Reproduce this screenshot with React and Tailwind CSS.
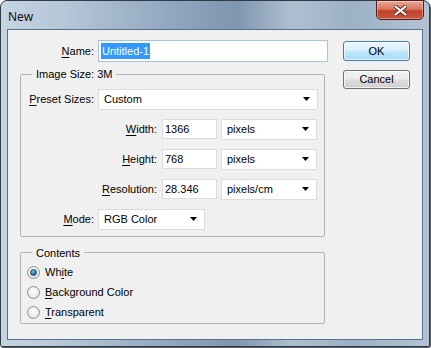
import React from 'react';

function Key({ children }) {
  return <span className="underline underline-offset-[2px]">{children}</span>;
}

function Arrow() {
  return (
    <svg width="7" height="4" viewBox="0 0 7 4" className="shrink-0">
      <path d="M0 0h7L3.5 4z" fill="#000" />
    </svg>
  );
}

function Select({ value, className }) {
  return (
    <div className={`flex h-[21px] items-center justify-between border border-[#dcdcdc] bg-white pl-[5px] pr-[7px] ${className}`}>
      <span>{value}</span>
      <Arrow />
    </div>
  );
}

function Field({ value }) {
  return (
    <div className="flex h-[20px] w-[55px] items-center border border-[#dcdcdc] bg-white pl-[2px]">
      {value}
    </div>
  );
}

function SizeRow({ label, value, unit }) {
  return (
    <div className="flex items-center">
      <div className="w-[136px] text-right">{label}</div>
      <div className="ml-[5px]">
        <Field value={value} />
      </div>
      <Select value={unit} className="ml-[4px] w-[96px]" />
    </div>
  );
}

function Radio({ checked, children }) {
  return (
    <div className="flex h-[20px] items-center">
      <span className="flex h-[13px] w-[13px] items-center justify-center rounded-full border border-[#8f9090] bg-[radial-gradient(circle_at_50%_40%,#ffffff_0%,#eeeeee_50%,#d2d2d2_100%)]">
        {checked && (
          <span className="h-[7px] w-[7px] rounded-full border border-[#164a70] bg-[radial-gradient(circle_at_40%_35%,#7cc6ec_0%,#2479b3_55%,#143f63_100%)]" />
        )}
      </span>
      <span className="ml-[5px]">{children}</span>
    </div>
  );
}

export default function App() {
  return (
    <div className="h-[348px] w-[431px] bg-white font-['Liberation_Sans',Arial,sans-serif] text-[11px] text-black">
      <div className="flex h-[347px] w-[430px] flex-col rounded-t-[7px] rounded-b-[2px] border border-[#2e3b49] bg-[linear-gradient(90deg,#c6d4e2_0%,#b6c7d8_14%,#93a9c0_38%,#7f96af_55%,#aebfd1_68%,#9cb1c6_82%,#b2c3d4_100%)] px-[6px] pb-[6px] shadow-[1px_1px_1px_rgba(0,0,0,0.7)]">
        {/* title bar */}
        <div className="flex h-[28px] shrink-0 items-start justify-between">
          <span className="mt-[7px] ml-[1px] font-['Noto_Sans',sans-serif] text-[12px] text-[#111]">New</span>
          <div className="mr-[-1px] mt-[-1px] flex h-[20px] w-[48px] items-center justify-center rounded-b-[5px] border border-[#4a2219] bg-[linear-gradient(180deg,#e9a99a_0%,#d8775f_45%,#c2402a_55%,#c9553c_100%)] shadow-[inset_0_0_0_1px_rgba(255,255,255,0.35)]">
            <svg width="13" height="11" viewBox="0 0 13 11">
              <path d="M1.5 1.5l10 8M11.5 1.5l-10 8" stroke="#5a2b22" strokeWidth="4" strokeLinecap="round" />
              <path d="M1.5 1.5l10 8M11.5 1.5l-10 8" stroke="#fff" strokeWidth="2.2" strokeLinecap="round" />
            </svg>
          </div>
        </div>

        {/* client area */}
        <div className="flex flex-1 border border-[#58708a] bg-[#f0f0f0]">
          <div className="w-[320px]">
            <div className="mt-[10px] flex items-center">
              <div className="w-[86px] text-right">
                <Key>N</Key>ame:
              </div>
              <div className="ml-[4px] flex h-[22px] w-[230px] items-center border border-[#a9c3dc] bg-white pl-[2px]">
                <span className="bg-[#3399ff] px-[1px] text-white">Untitled-1</span>
              </div>
            </div>

            <fieldset className="mt-[4px] ml-[12px] w-[305px] rounded-[2px] border border-[#b3b3b3] pb-[6px]">
              <legend className="ml-[11px] px-[4px]">Image Size: 3M</legend>
              <div className="mt-[6px] flex flex-col gap-[9px]">
                <div className="flex items-center">
                  <div className="w-[73px] text-right">
                    <Key>P</Key>reset Sizes:
                  </div>
                  <Select value="Custom" className="ml-[4px] w-[220px]" />
                </div>
                <SizeRow label={<><Key>W</Key>idth:</>} value="1366" unit="pixels" />
                <SizeRow label={<><Key>H</Key>eight:</>} value="768" unit="pixels" />
                <SizeRow label={<><Key>R</Key>esolution:</>} value="28.346" unit="pixels/cm" />
                <div className="flex items-center">
                  <div className="w-[73px] text-right">
                    <Key>M</Key>ode:
                  </div>
                  <Select value="RGB Color" className="ml-[4px] w-[107px]" />
                </div>
              </div>
            </fieldset>

            <fieldset className="mt-[8px] ml-[12px] w-[305px] rounded-[2px] border border-[#b3b3b3] pb-[1px]">
              <legend className="ml-[11px] px-[4px]">Contents</legend>
              <div className="mt-[1px] ml-[6px] flex flex-col">
                <Radio checked>
                  Wh<Key>i</Key>te
                </Radio>
                <Radio>
                  <Key>B</Key>ackground Color
                </Radio>
                <Radio>
                  <Key>T</Key>ransparent
                </Radio>
              </div>
            </fieldset>
          </div>

          <div className="ml-[15px] mt-[11px] flex flex-col gap-[9px]">
            <div className="flex h-[20px] w-[67px] items-center justify-center rounded-[3px] border border-[#3c7fb1] bg-[linear-gradient(180deg,#eaf6fd_0%,#d9f0fc_45%,#bee6fd_55%,#a7d9f5_100%)] shadow-[inset_0_0_0_1px_rgba(255,255,255,0.7)]">
              OK
            </div>
            <div className="flex h-[19px] w-[67px] items-center justify-center rounded-[3px] border border-[#707070] bg-[linear-gradient(180deg,#f2f2f2_0%,#ebebeb_45%,#dddddd_55%,#cfcfcf_100%)] shadow-[inset_0_0_0_1px_rgba(255,255,255,0.7)]">
              Cancel
            </div>
          </div>
        </div>
      </div>
    </div>
  );
}
